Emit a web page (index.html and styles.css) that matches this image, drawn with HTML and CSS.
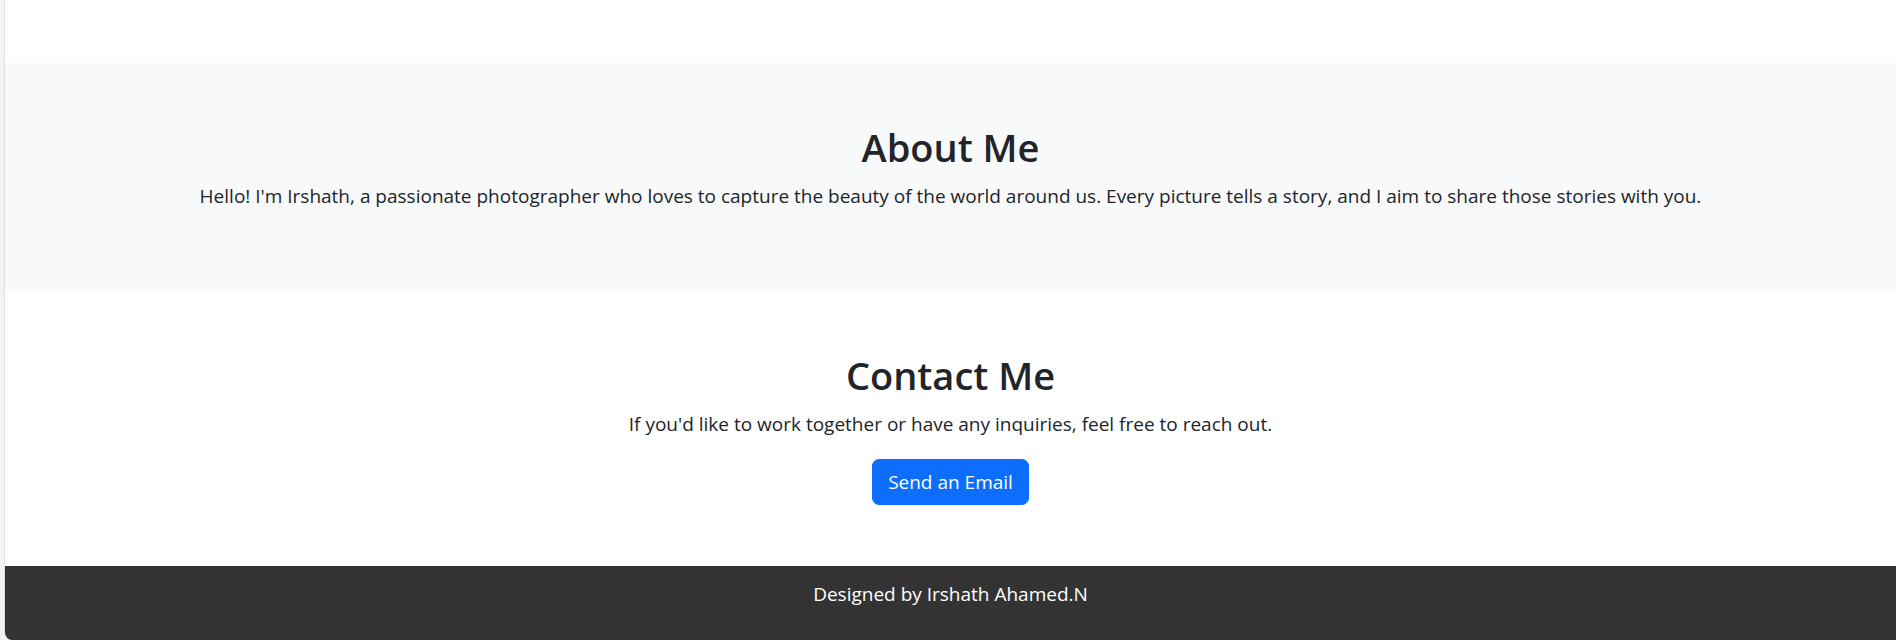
FILE: index.html
```html
<!DOCTYPE html>
<html lang="en">
<head>
<meta charset="utf-8">
<title>Irshath Photography</title>
<link rel="stylesheet" href="styles.css">
</head>
<body>
<div class="window">
  <div class="top-space"></div>
  <section class="section section-light">
    <h2 class="heading">About Me</h2>
    <p class="lead-text">Hello! I'm Irshath, a passionate photographer who loves to capture the beauty of the world around us. Every picture tells a story, and I aim to share those stories with you.</p>
  </section>
  <section class="section section-contact">
    <h2 class="heading">Contact Me</h2>
    <p class="lead-text">If you'd like to work together or have any inquiries, feel free to reach out.</p>
    <a class="btn" href="#">Send an Email</a>
  </section>
  <footer class="footer">
    <p class="footer-text">Designed by Irshath Ahamed.N</p>
  </footer>
</div>
</body>
</html>
```

FILE: styles.css
```css
html, body {
  margin: 0;
  padding: 0;
  height: 100%;
}
body {
  background: #f3f3f3;
  padding-left: 4px;
  box-sizing: border-box;
  font-family: "Open Sans", "Noto Sans", sans-serif;
  font-size: 19px;
  line-height: 30px;
  color: #212529;
  overflow: hidden;
}
.window {
  background: #fff;
  border-left: 1px solid #dedede;
  min-height: 100%;
  border-bottom-left-radius: 8px;
  overflow: hidden;
  display: flex;
  flex-direction: column;
}
.top-space {
  height: 63px;
}
.section {
  padding: 60px 0;
  text-align: center;
}
.section-contact {
  padding-bottom: 61px;
}
.section-light {
  background: #f8f9fa;
}
.heading {
  margin: 0 0 10px;
  font-size: 38px;
  line-height: 48px;
  font-weight: 600;
}
.lead-text {
  margin: 0 0 20px;
}
.btn {
  display: inline-block;
  background: #0d6efd;
  color: #fff;
  text-decoration: none;
  border: 1px solid #0d6efd;
  border-radius: 7px;
  padding: 7px 15px;
  line-height: 30px;
}
.footer {
  background: #333;
  color: #fff;
  text-align: center;
  padding: 13px 0 12px;
  flex: 1;
}
.footer-text {
  margin: 0;
}
```
